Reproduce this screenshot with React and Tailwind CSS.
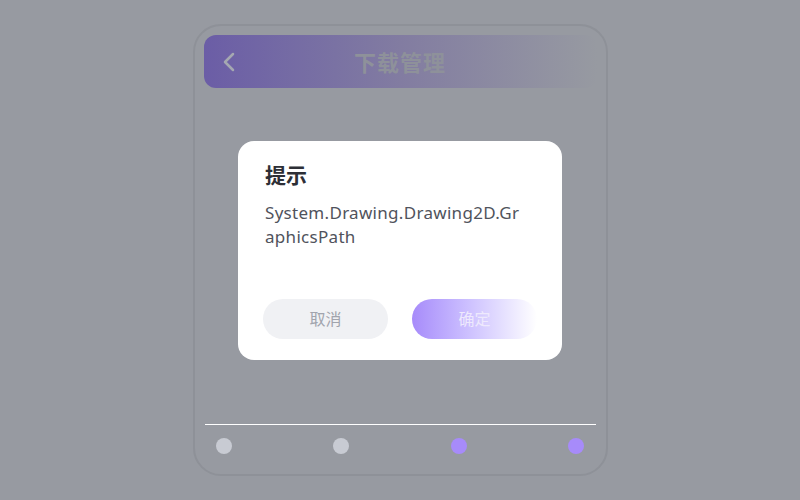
export default function App() {
  const dots = ["bg-[#c8cbd3]", "bg-[#c8cbd3]", "bg-[#a78bfa]", "bg-[#a78bfa]"];
  return (
    <div
      className="w-[800px] h-[500px] bg-[#979aa1] flex justify-center pt-[24px] relative"
      style={{ fontFamily: "'Noto Sans', 'Noto Sans CJK SC', sans-serif" }}
    >
      <div className="w-[415px] h-[452px] rounded-[28px] border-2 border-[#8e9198] flex flex-col px-[9px] pt-[9px] pb-[6px]">
        <div className="h-[53px] rounded-[12px] bg-gradient-to-r from-[#6b5da6] via-[#827ca1] to-[#979aa1] flex items-center relative">
          <svg className="absolute left-[17px]" width="16" height="22" viewBox="0 0 16 22" fill="none">
            <path d="M12 3 L4 11 L12 19" stroke="#a5a8b1" strokeWidth="2.5" strokeLinecap="round" strokeLinejoin="round" />
          </svg>
          <div className="flex-1 text-center text-[22px] font-bold text-[#8e919a] tracking-[1px]" style={{ fontFamily: "'Noto Sans CJK SC', sans-serif" }}>
            下载管理
          </div>
        </div>
        <div className="flex-1" />
        <div className="border-t border-white mx-[1px]" />
        <div className="flex justify-between px-[12px] pt-[13px] pb-[14px]">
          {dots.map((c, i) => (
            <div key={i} className={`w-4 h-4 rounded-full ${c}`} />
          ))}
        </div>
      </div>
      <div className="absolute left-[238px] top-[141px] w-[324px] h-[219px] bg-white rounded-[16px] px-[27px] pt-[18px] flex flex-col">
        <div className="text-[21px] font-bold text-[#2d2f36] leading-[30px]" style={{ fontFamily: "'Noto Sans CJK SC', sans-serif" }}>
          提示
        </div>
        <div className="mt-[12px] text-[17px] leading-[24px] text-[#50535c] tracking-[0.3px] whitespace-nowrap">
          System.Drawing.Drawing2D.Gr
          <br />
          aphicsPath
        </div>
        <div className="flex justify-between mt-[50px] -mx-[2px]">
          <div className="w-[125px] h-[40px] rounded-full bg-[#f0f1f4] flex items-center justify-center text-[16px] text-[#a1a4ad]">
            取消
          </div>
          <div className="w-[125px] h-[40px] rounded-full bg-gradient-to-r from-[#a78bfa] to-[#ffffff] flex items-center justify-center text-[16px] text-[#eee9fd]">
            确定
          </div>
        </div>
      </div>
    </div>
  );
}
